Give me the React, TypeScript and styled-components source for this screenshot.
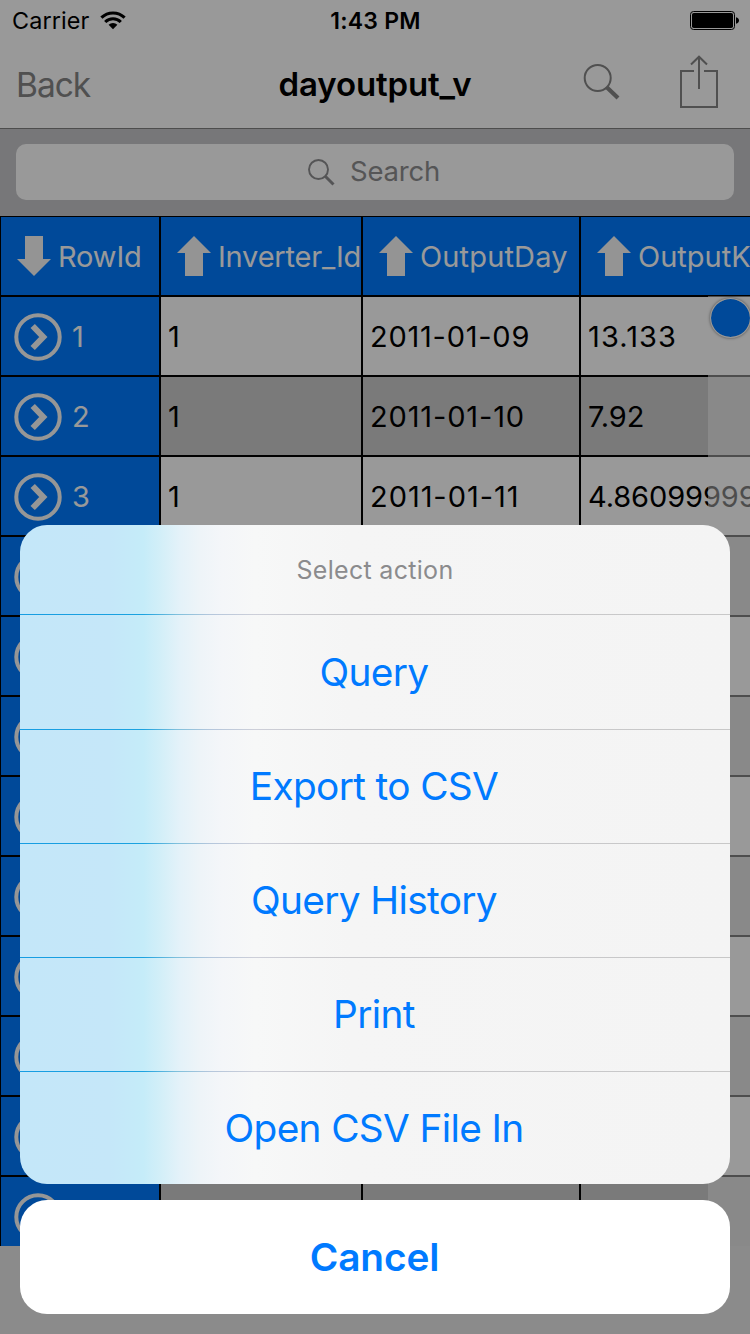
import React from "react";
import styled, { createGlobalStyle, css } from "styled-components";

const GlobalStyle = createGlobalStyle`
  * { box-sizing: border-box; }
  body { margin: 0; background: #e8e8e8; overflow: hidden; }
  body, button { font-family: Inter, "Liberation Sans", sans-serif; }
`;

const Screen = styled.div`
  position: relative;
  width: 750px;
  height: 1334px;
  overflow: hidden;
  display: flex;
  flex-direction: column;
  background: #e8e8e8;
  color: #000;
`;

const StatusBar = styled.div`
  flex: none;
  height: 40px;
  display: grid;
  grid-template-columns: 1fr auto 1fr;
  align-items: center;
  padding: 1px 11px 0 12px;
  background: #fff;
  font-size: 23.4px;
`;

const Carrier = styled.div`
  display: flex;
  align-items: center;
  gap: 11px;
  letter-spacing: 0.1px;
`;

const Clock = styled.div`
  font-weight: 600;
  font-size: 23px;
  letter-spacing: 0.2px;
`;

const BatteryIcon = styled.svg`
  justify-self: end;
`;

const NavBar = styled.div`
  flex: none;
  height: 89px;
  display: grid;
  grid-template-columns: 1fr auto 1fr;
  align-items: center;
  padding: 0 32px 0 16px;
  background: #fff;
  border-bottom: 1px solid #808080;
`;

const BackButton = styled.span`
  padding-top: 1px;
  font-size: 33.5px;
  letter-spacing: -1px;
  color: #858585;
`;

const NavTitle = styled.h1`
  margin: 0 -16px 0 0;
  font-size: 33px;
  font-weight: 600;
  letter-spacing: -0.15px;
`;

const NavActions = styled.div`
  display: flex;
  justify-content: flex-end;
  align-items: center;
  gap: 60px;
  padding-bottom: 4px;
`;

const SearchBar = styled.div`
  flex: none;
  height: 87px;
  padding: 15px 16px 16px;
  background: #c7c7ca;
`;

const SearchField = styled.div`
  height: 56px;
  display: flex;
  align-items: center;
  justify-content: center;
  gap: 15px;
  padding: 0 2px 2px 0;
  border-radius: 10px;
  background: #fff;
  color: #8e8e90;
  font-size: 27.5px;
  letter-spacing: -0.2px;

  svg {
    margin-top: 2px;
  }
`;

const Table = styled.div`
  position: relative;
  flex: none;
  height: 1030px;
  overflow: hidden;
`;

const Row = styled.div`
  width: 900px;
  height: 80px;
  display: grid;
  grid-template-columns: 160px 202px 218px 320px;
`;

const Cell = styled.div<{ $tone: "blue" | "white" | "gray"; $tracking?: number }>`
  display: flex;
  align-items: center;
  overflow: hidden;
  white-space: nowrap;
  border: 1px solid #000;
  padding: 0 0 0 7px;
  font-size: 29px;
  letter-spacing: ${({ $tracking = -0.1 }) => $tracking}px;
  ${({ $tone }) =>
    $tone === "blue"
      ? css`background: #007bff; color: #fff;`
      : css`background: ${$tone === "white" ? "#fff" : "#cbcbcb"};`}

  svg {
    flex: none;
  }
`;

const HeaderCell = styled(Cell)`
  gap: 7px;
  padding: 0 0 0 16px;
`;

const IdCell = styled(Cell)`
  gap: 10px;
  padding: 0 0 0 13px;

  svg {
    margin-top: 2px;
  }
`;

const IndexStrip = styled.div`
  position: absolute;
  top: 80px;
  left: 708px;
  right: 0;
  bottom: 0;
  background: rgba(255, 255, 255, 0.5);
`;

const IndexKnob = styled.div`
  position: absolute;
  top: 82px;
  left: 710px;
  width: 41px;
  height: 40px;
  border-radius: 50%;
  border: 1px solid #fff;
  background: #007bff;
  background-clip: padding-box;
  box-shadow: 0 0 3px rgba(0, 0, 0, 0.5);
`;

const Backdrop = styled.div`
  position: absolute;
  inset: 0;
  display: flex;
  flex-direction: column;
  justify-content: flex-end;
  gap: 16px;
  padding: 20px;
  background: rgba(0, 0, 0, 0.4);
`;

const Sheet = styled.div`
  display: flex;
  flex-direction: column;
  height: 659px;
  border-radius: 27px;
  overflow: hidden;
  background: linear-gradient(
    90deg,
    #c4e7f9 0,
    #c5e7f9 90px,
    #c5ecf9 123px,
    #d4eff8 142px,
    #e4f2f9 160px,
    #eef4f8 180px,
    #f4f6f9 202px,
    #f7f8f8 235px,
    #f5f5f5 330px,
    #f4f4f4 100%
  );
`;

const SheetTitle = styled.div`
  flex: none;
  height: 89px;
  line-height: 90px;
  text-align: center;
  color: #8b8b8d;
  font-size: 25px;
  letter-spacing: 0.3px;
`;

const Separator = styled.div`
  flex: none;
  height: 1px;
  background: linear-gradient(
    90deg,
    #179de2 0,
    #1ba2e0 123px,
    #7fc0dc 157px,
    #b4c6dc 190px,
    #cdcfd9 235px,
    #c9c9cd 300px,
    #c8c8c8 100%
  );
`;

const Action = styled.button<{ $height: number }>`
  flex: none;
  height: ${({ $height }) => $height}px;
  border: 0;
  padding: 0 2px 2px 0;
  background: none;
  color: #007aff;
  font-size: 38.8px;
  letter-spacing: -0.65px;
`;

const Cancel = styled.button`
  flex: none;
  height: 114px;
  padding: 0 1px 2px 0;
  border: 0;
  border-radius: 27px;
  background: #fff;
  color: #007aff;
  font-size: 38.8px;
  font-weight: 600;
  letter-spacing: -0.1px;
`;

const SortArrow = ({ down }: { down?: boolean }) => (
  <svg width="34" height="40" viewBox="0 0 34 40" fill="#f7f7f7">
    <path d={down ? "M8 0H26V23H34L17 40L0 23H8Z" : "M17 0L34 17H26V40H8V17H0Z"} />
  </svg>
);

const Disclosure = () => (
  <svg width="48" height="48" viewBox="0 0 48 48" fill="none" stroke="#fafafa">
    <circle cx="24" cy="24" r="21.7" strokeWidth="4" />
    <path d="M18.7 13L29.3 24L18.7 35" strokeWidth="6" />
  </svg>
);

const headers = [
  { name: "RowId", tracking: -0.15 },
  { name: "Inverter_Id", tracking: -0.2 },
  { name: "OutputDay", tracking: 0.15 },
  { name: "OutputKWH", tracking: 0 },
];

type Value = { text: string; tracking?: number };
const emptyRow: Value[] = [{ text: "" }, { text: "" }, { text: "" }];
const records: Value[][] = [
  [{ text: "1" }, { text: "2011-01-09", tracking: 0.75 }, { text: "13.133", tracking: 1.1 }],
  [{ text: "1" }, { text: "2011-01-10", tracking: 0.85 }, { text: "7.92" }],
  [{ text: "1" }, { text: "2011-01-11", tracking: 0.95 }, { text: "4.860999999" }],
  ...Array.from({ length: 9 }, () => emptyRow),
];

const actions = [
  { label: "Query", height: 114 },
  { label: "Export to CSV", height: 113 },
  { label: "Query History", height: 113 },
  { label: "Print", height: 113 },
  { label: "Open CSV File In", height: 112 },
];

export default function App() {
  return (
    <>
      <GlobalStyle />
      <Screen>
        <StatusBar>
          <Carrier>
            Carrier
            <svg width="26" height="19" viewBox="0 0 26 19" fill="none" stroke="#000" strokeWidth="3.1">
              <path d="M1.4 6.7A16.5 16.5 0 0 1 24.6 6.7" />
              <path d="M5.2 11A11 11 0 0 1 20.8 11" />
              <path d="M13 18.3L8.6 13.8A6.2 6.2 0 0 1 17.4 13.8Z" fill="#000" stroke="none" />
            </svg>
          </Carrier>
          <Clock>1:43 PM</Clock>
          <BatteryIcon width="49" height="19" viewBox="0 0 49 19">
            <rect x="0.5" y="0.5" width="44" height="18" rx="3" fill="none" stroke="#000" />
            <rect x="2" y="2" width="41" height="15" rx="1.8" />
            <path d="M46 6.2C48 6.6 49 8 49 9.5S48 12.4 46 12.8Z" />
          </BatteryIcon>
        </StatusBar>
        <NavBar>
          <BackButton>Back</BackButton>
          <NavTitle>dayoutput_v</NavTitle>
          <NavActions>
            <svg width="37" height="38" viewBox="0 0 37 38" fill="none" stroke="#858585">
              <circle cx="14.7" cy="15" r="13" strokeWidth="2" />
              <path d="M23.5 24L35 35" strokeWidth="4.2" />
            </svg>
            <svg width="38" height="54" viewBox="0 0 38 54" fill="none" stroke="#858585" strokeWidth="2">
              <path d="M14 16H1V52H37V16H24M19 34V2M11 9.5L19 1.7L27 9.5" />
            </svg>
          </NavActions>
        </NavBar>
        <SearchBar>
          <SearchField>
            <svg width="27" height="27" viewBox="0 0 27 27" fill="none" stroke="#8e8e90">
              <circle cx="10.5" cy="10.5" r="9.5" strokeWidth="1.9" />
              <path d="M17.5 17.5L25.5 25.5" strokeWidth="3" />
            </svg>
            Search
          </SearchField>
        </SearchBar>
        <Table>
          <Row>
            {headers.map(({ name, tracking }, i) => (
              <HeaderCell key={name} $tone="blue" $tracking={tracking}>
                <SortArrow down={i === 0} />
                {name}
              </HeaderCell>
            ))}
          </Row>
          {records.map((values, i) => (
            <Row key={i}>
              <IdCell $tone="blue">
                <Disclosure />
                {i < 3 && i + 1}
              </IdCell>
              {values.map(({ text, tracking }, j) => (
                <Cell key={j} $tone={i % 2 ? "gray" : "white"} $tracking={tracking}>
                  {text}
                </Cell>
              ))}
            </Row>
          ))}
          <IndexStrip />
          <IndexKnob />
        </Table>
        <Backdrop>
          <Sheet>
            <SheetTitle>Select action</SheetTitle>
            {actions.map(({ label, height }) => (
              <React.Fragment key={label}>
                <Separator />
                <Action $height={height}>{label}</Action>
              </React.Fragment>
            ))}
          </Sheet>
          <Cancel>Cancel</Cancel>
        </Backdrop>
      </Screen>
    </>
  );
}
